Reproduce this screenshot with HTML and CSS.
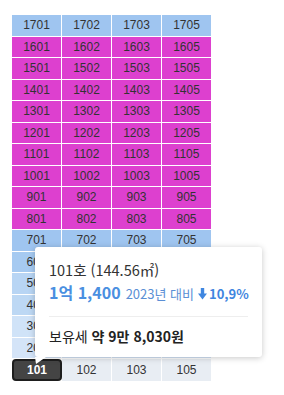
FILE: index.html
```html
<!DOCTYPE html>
<html lang="ko">
<head>
    <meta charset="UTF-8">
    <meta name="viewport" content="width=device-width, initial-scale=1.0">
    <title>동 배치도</title>
    <link rel="stylesheet" href="styles.css">
</head>
<body>

<div class="dong">
    <div class="hosu">
        <div class="ho ho-top">1701</div><div class="ho ho-top">1702</div><div class="ho ho-top">1703</div><div class="ho ho-top">1705</div>
        <div class="ho ho-hot">1601</div><div class="ho ho-hot">1602</div><div class="ho ho-hot">1603</div><div class="ho ho-hot">1605</div>
        <div class="ho ho-hot">1501</div><div class="ho ho-hot">1502</div><div class="ho ho-hot">1503</div><div class="ho ho-hot">1505</div>
        <div class="ho ho-hot">1401</div><div class="ho ho-hot">1402</div><div class="ho ho-hot">1403</div><div class="ho ho-hot">1405</div>
        <div class="ho ho-hot">1301</div><div class="ho ho-hot">1302</div><div class="ho ho-hot">1303</div><div class="ho ho-hot">1305</div>
        <div class="ho ho-hot">1201</div><div class="ho ho-hot">1202</div><div class="ho ho-hot">1203</div><div class="ho ho-hot">1205</div>
        <div class="ho ho-hot">1101</div><div class="ho ho-hot">1102</div><div class="ho ho-hot">1103</div><div class="ho ho-hot">1105</div>
        <div class="ho ho-hot">1001</div><div class="ho ho-hot">1002</div><div class="ho ho-hot">1003</div><div class="ho ho-hot">1005</div>
        <div class="ho ho-hot">901</div><div class="ho ho-hot">902</div><div class="ho ho-hot">903</div><div class="ho ho-hot">905</div>
        <div class="ho ho-hot">801</div><div class="ho ho-hot">802</div><div class="ho ho-hot">803</div><div class="ho ho-hot">805</div>
        <div class="ho ho-top">701</div><div class="ho ho-top">702</div><div class="ho ho-top">703</div><div class="ho ho-top">705</div>
        <div class="ho ho-6">601</div><div class="ho ho-6">602</div><div class="ho ho-6">603</div><div class="ho ho-6">605</div>
        <div class="ho ho-5">501</div><div class="ho ho-5">502</div><div class="ho ho-5">503</div><div class="ho ho-5">505</div>
        <div class="ho ho-4">401</div><div class="ho ho-4">402</div><div class="ho ho-4">403</div><div class="ho ho-4">405</div>
        <div class="ho ho-3">301</div><div class="ho ho-3">302</div><div class="ho ho-3">303</div><div class="ho ho-3">305</div>
        <div class="ho ho-2">201</div><div class="ho ho-2">202</div><div class="ho ho-2">203</div><div class="ho ho-2">205</div>
        <div class="ho ho-selected">101</div><div class="ho ho-1">102</div><div class="ho ho-1">103</div><div class="ho ho-1">105</div>
    </div>

    <div class="tooltip">
        <div class="tt-title">101호 (144.56㎡)</div>
        <div class="tt-price">
            <span class="tt-amount">1억 1,400</span>
            <span class="tt-year">2023년 대비</span>
            <span class="tt-change">
                <svg class="tt-arrow" width="9" height="12" viewBox="0 0 9 12">
                    <rect x="2.8" y="0" width="3.4" height="6.5" fill="#3f86e0"/>
                    <polygon points="0,5.5 9,5.5 4.5,11.5" fill="#3f86e0"/>
                </svg>10,9%
            </span>
        </div>
        <div class="tt-line"></div>
        <div class="tt-tax">보유세 <b>약 9만 8,030원</b></div>
        <div class="tt-tail"></div>
    </div>
</div>

</body>
</html>
```

FILE: styles.css
```css
* {
    box-sizing: border-box;
}

body {
    margin: 0;
    padding: 15px 12px;
    background-color: #fff;
    font-family: "Liberation Sans", Arial, sans-serif;
}

.dong {
    position: relative;
    width: 199px;
}

.hosu {
    display: grid;
    grid-template-columns: repeat(4, 49px);
    grid-auto-rows: 20.5px;
    gap: 1px;
}

.ho {
    display: flex;
    justify-content: center;
    align-items: center;
    font-size: 12px;
    color: #333;
}

.ho-top { background-color: #9fc5f0; }
.ho-hot { background-color: #dd40cf; }
.ho-6 { background-color: #a6caf1; }
.ho-5 { background-color: #b8d5f4; }
.ho-4 { background-color: #bdd8f4; }
.ho-3 { background-color: #d0e3f8; }
.ho-2 { background-color: #d4e4f8; }
.ho-1 { background-color: #e8edf3; height: 21.7px; }

.ho-selected {
    height: 21.7px;
    width: 50px;
    background-color: #444;
    border: 2px solid #1e1e1e;
    border-radius: 4px;
    color: #fff;
    font-weight: bold;
}

.tooltip {
    position: absolute;
    left: 23px;
    top: 232px;
    width: 227px;
    padding: 13px 14px 11px;
    background-color: #fff;
    border-radius: 3px;
    box-shadow: 0 1px 6px rgba(0, 0, 0, 0.22);
    font-family: "Noto Sans CJK KR", sans-serif;
    color: #333;
}

.tt-title {
    font-size: 14.5px;
    line-height: 20px;
}

.tt-price {
    margin-top: 2px;
    line-height: 20px;
    white-space: nowrap;
    display: flex;
    align-items: baseline;
}

.tt-amount {
    font-size: 16px;
    font-weight: bold;
    color: #4a8fe1;
}

.tt-year {
    margin-left: 5px;
    font-size: 13px;
    color: #5a8fd5;
}

.tt-change {
    margin-left: 4px;
    font-size: 13px;
    font-weight: bold;
    color: #3f86e0;
}

.tt-arrow {
    margin-right: 2px;
    vertical-align: -1px;
}

.tt-line {
    height: 1px;
    margin: 12px 0 9px;
    background-color: #eee;
}

.tt-tax {
    font-size: 14px;
    line-height: 20px;
    color: #222;
}

.tt-tail {
    position: absolute;
    left: 0;
    bottom: -7px;
    width: 11px;
    height: 7px;
    background-color: #fff;
    clip-path: polygon(0 0, 11px 0, 1px 7px);
}
```
